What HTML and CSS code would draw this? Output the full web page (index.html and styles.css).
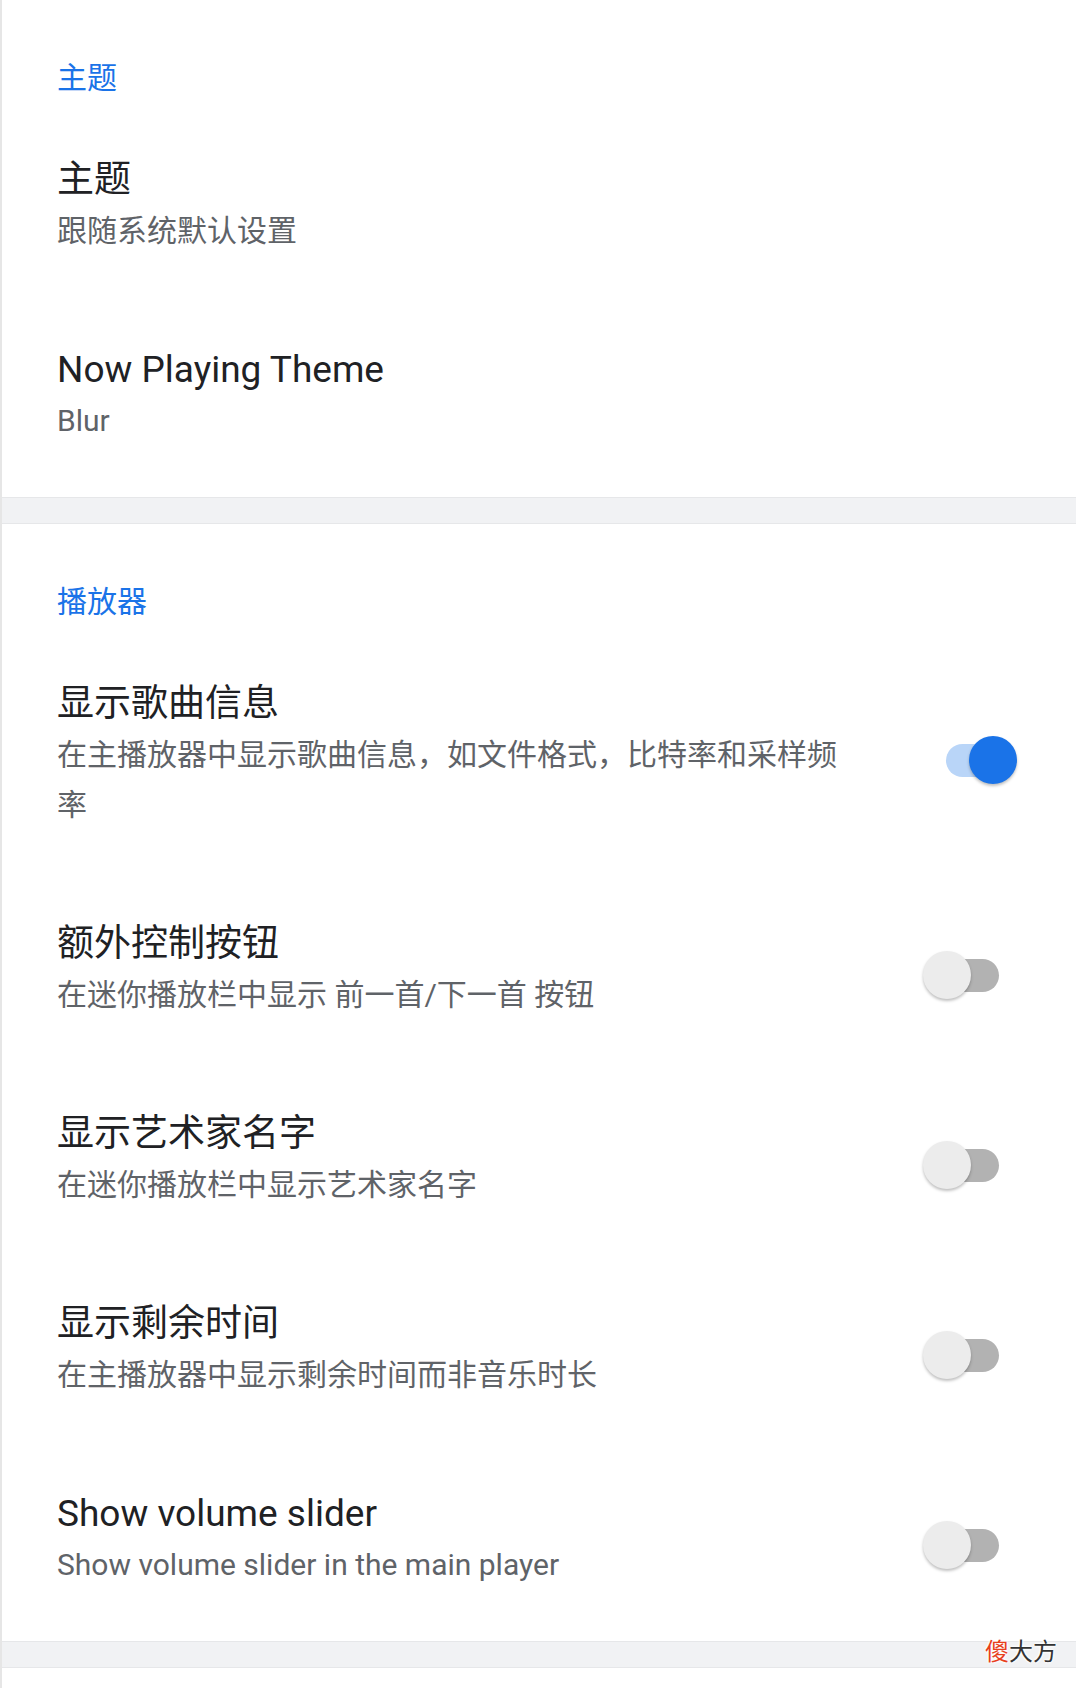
FILE: index.html
```html
<!DOCTYPE html>
<html lang="zh-CN">
<head>
    <meta charset="UTF-8">
    <meta name="viewport" content="width=device-width, initial-scale=1.0">
    <title>设置</title>
    <link rel="stylesheet" href="styles.css">
</head>
<body>
    <main class="settings">
        <!-- Theme section -->
        <section class="group">
            <h2 class="group-title">主题</h2>
            <div class="pref">
                <div class="pref-text">
                    <div class="pref-title">主题</div>
                    <div class="pref-summary">跟随系统默认设置</div>
                </div>
            </div>
            <div class="pref">
                <div class="pref-text">
                    <div class="pref-title">Now Playing Theme</div>
                    <div class="pref-summary">Blur</div>
                </div>
            </div>
        </section>

        <div class="divider"></div>

        <!-- Player section -->
        <section class="group">
            <h2 class="group-title">播放器</h2>
            <div class="pref">
                <div class="pref-text">
                    <div class="pref-title">显示歌曲信息</div>
                    <div class="pref-summary">在主播放器中显示歌曲信息，如文件格式，比特率和采样频率</div>
                </div>
                <div class="switch on"><span class="track"></span><span class="thumb"></span></div>
            </div>
            <div class="pref">
                <div class="pref-text">
                    <div class="pref-title">额外控制按钮</div>
                    <div class="pref-summary">在迷你播放栏中显示 前一首/下一首 按钮</div>
                </div>
                <div class="switch"><span class="track"></span><span class="thumb"></span></div>
            </div>
            <div class="pref">
                <div class="pref-text">
                    <div class="pref-title">显示艺术家名字</div>
                    <div class="pref-summary">在迷你播放栏中显示艺术家名字</div>
                </div>
                <div class="switch"><span class="track"></span><span class="thumb"></span></div>
            </div>
            <div class="pref">
                <div class="pref-text">
                    <div class="pref-title">显示剩余时间</div>
                    <div class="pref-summary">在主播放器中显示剩余时间而非音乐时长</div>
                </div>
                <div class="switch"><span class="track"></span><span class="thumb"></span></div>
            </div>
            <div class="pref">
                <div class="pref-text">
                    <div class="pref-title">Show volume slider</div>
                    <div class="pref-summary">Show volume slider in the main player</div>
                </div>
                <div class="switch"><span class="track"></span><span class="thumb"></span></div>
            </div>
        </section>

        <div class="divider"></div>
    </main>

    <div class="watermark"><span class="wm-red">傻</span>大方</div>
</body>
</html>
```
FILE: styles.css
```css
* {
    margin: 0;
    padding: 0;
    box-sizing: border-box;
}
body {
    font-family: Roboto, "Noto Sans CJK SC", sans-serif;
    background: white;
    color: #202124;
    width: 1076px;
    height: 1688px;
    overflow: hidden;
    position: relative;
}
.settings {
    border-left: 2px solid #e6e6e6;
    min-height: 1688px;
}
.group {
    padding-bottom: 6px;
}
.group-title {
    font-size: 30px;
    font-weight: normal;
    line-height: 40px;
    color: #1a73e8;
    padding: 58px 0 0 55px;
    margin-bottom: 13px;
}
.pref {
    display: flex;
    align-items: center;
    padding: 45px 0 45px 55px;
}
.pref-text {
    flex: 1;
    max-width: 790px;
}
.pref-title {
    font-size: 37px;
    line-height: 48px;
    color: #202124;
}
.pref-summary {
    font-size: 30px;
    line-height: 50px;
    margin-top: 2px;
    color: #5f6368;
}

/* Android-style switch */
.switch {
    position: relative;
    width: 100px;
    height: 48px;
    margin: 10px 39px 0 auto;
}
.switch .track {
    position: absolute;
    left: 9px;
    top: 8px;
    width: 53px;
    height: 33px;
    border-radius: 17px;
    background: #b2b2b2;
}
.switch .thumb {
    position: absolute;
    left: -14px;
    top: 0;
    width: 48px;
    height: 48px;
    border-radius: 50%;
    background: #ececec;
    box-shadow: 0 2px 3px rgba(0, 0, 0, 0.25);
}
.switch.on .track {
    background: #b9d5f8;
}
.switch.on .thumb {
    left: 32px;
    background: #1a73e8;
}
.divider {
    height: 27px;
    background: #f1f2f4;
    border-top: 1px solid #e6e7e9;
    border-bottom: 1px solid #e6e7e9;
}
.watermark {
    position: absolute;
    right: 19px;
    top: 1634px;
    font-family: "Noto Sans CJK SC", sans-serif;
    font-size: 24px;
    line-height: 32px;
    color: #333;
    text-shadow: 0 0 3px white, 0 0 3px white, 0 0 3px white;
}
.wm-red {
    color: #e8401c;
}
```
